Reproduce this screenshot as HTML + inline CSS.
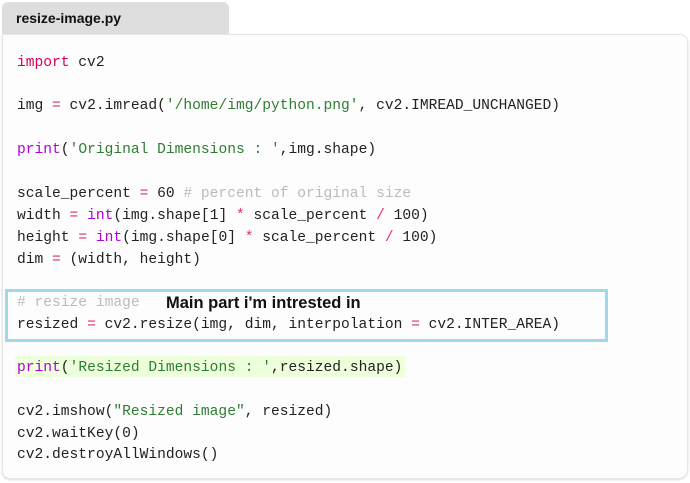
<!DOCTYPE html>
<html><head><style>
body{margin:0;width:690px;height:483px;background:#fff;position:relative;overflow:hidden;font-family:"Liberation Mono",monospace}
.tab{position:absolute;left:2px;top:2px;width:227px;height:33px;background:#dedede;border-radius:6px 6px 0 0;font:bold 14px "Liberation Sans",sans-serif;color:#111;line-height:33px;padding-left:14px;box-sizing:border-box}
.box{position:absolute;left:2px;top:34px;width:686px;height:445px;background:#fdfdfd;border:1px solid #e6e6e6;border-radius:0 8px 10px 8px;box-shadow:0 1px 2px #ddd;box-sizing:border-box}
.l{position:absolute;left:17px;font-size:14.6px;white-space:pre;color:#222;line-height:20px}
.k{color:#d6005a}.o{color:#e0306a;font-weight:normal}.s{color:#2e7d32}.b{color:#b000d8}.c{color:#bbb}
.hl{position:absolute;left:5px;top:289px;width:603px;height:53px;border:3px solid #a0d8ea;box-sizing:border-box}
.note{position:absolute;left:166px;top:294px;font:bold 16.5px "Liberation Sans Narrow","Liberation Sans",sans-serif;color:#111}
.g{position:absolute;left:15px;top:356px;width:390px;height:21px;background:#eeffdc}
</style></head><body>
<div class="tab">resize-image.py</div>
<div class="box"></div>
<div class="g"></div>
<div class="hl"></div>
<div class="l" style="top:53px"><span class="k">import</span> cv2</div>
<div class="l" style="top:96px">img <span class="o">=</span> cv2.imread(<span class="s">'/home/img/python.png'</span>, cv2.IMREAD_UNCHANGED)</div>
<div class="l" style="top:140px"><span class="b">print</span>(<span class="s">'Original Dimensions : '</span>,img.shape)</div>
<div class="l" style="top:184px">scale_percent <span class="o">=</span> 60 <span class="c"># percent of original size</span></div>
<div class="l" style="top:206px">width <span class="o">=</span> <span class="b">int</span>(img.shape[1] <span class="o">*</span> scale_percent <span class="o">/</span> 100)</div>
<div class="l" style="top:228px">height <span class="o">=</span> <span class="b">int</span>(img.shape[0] <span class="o">*</span> scale_percent <span class="o">/</span> 100)</div>
<div class="l" style="top:250px">dim <span class="o">=</span> (width, height)</div>
<div class="l" style="top:293px"><span class="c"># resize image</span></div>
<div class="note">Main part i'm intrested in</div>
<div class="l" style="top:315px">resized <span class="o">=</span> cv2.resize(img, dim, interpolation <span class="o">=</span> cv2.INTER_AREA)</div>
<div class="l" style="top:358px"><span class="b">print</span>(<span class="s">'Resized Dimensions : '</span>,resized.shape)</div>
<div class="l" style="top:402px">cv2.imshow(<span class="s">"Resized image"</span>, resized)</div>
<div class="l" style="top:424px">cv2.waitKey(0)</div>
<div class="l" style="top:445px">cv2.destroyAllWindows()</div>
</body></html>
